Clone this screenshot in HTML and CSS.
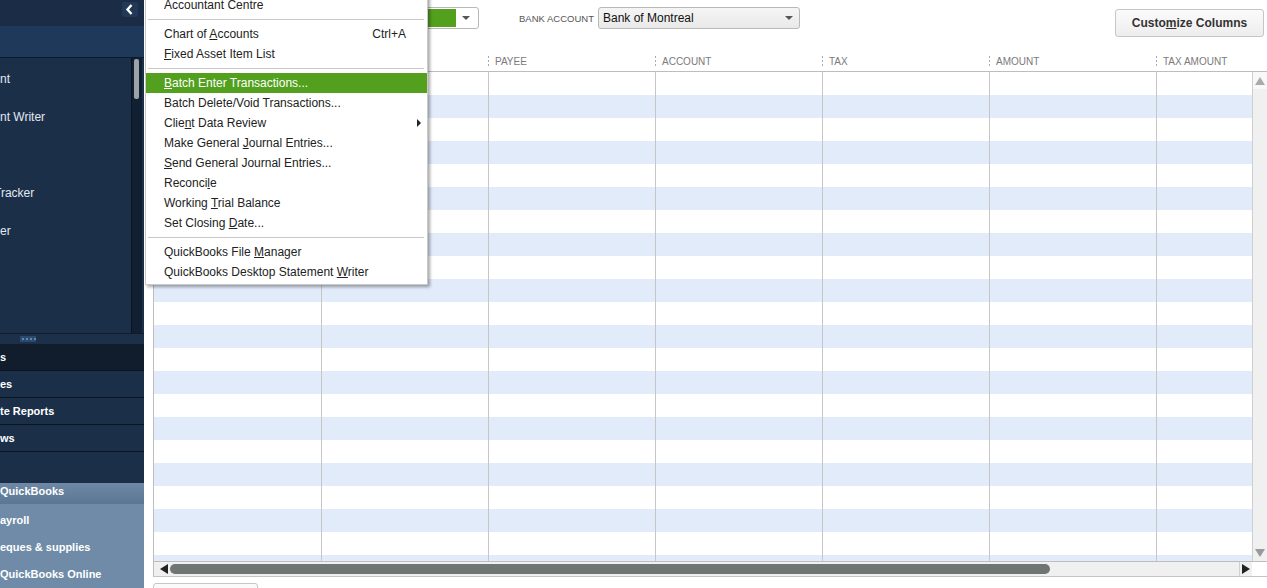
FILE: index.html
```html
<!DOCTYPE html>
<html>
  <head>
    <meta charset="utf-8">
    <title>Batch Enter Transactions - QuickBooks</title>
    <link rel="stylesheet" href="styles.css">
  </head>
  <body>
    <div id="app">
      <div id="sidebar">
        <div class="side-top">
          <span class="collapse">
            <svg width="16" height="15" viewBox="0 0 16 15"><path d="M9.5 3 L5.5 7.5 L9.5 12" fill="none" stroke="#fff" stroke-width="2.4"/></svg>
          </span>
        </div>
        <div class="side-band"></div>
        <div class="shortcuts">
          <ul class="short-list">
            <li>nt</li>
            <li>nt Writer</li>
            <li></li>
            <li class="cut">Tracker</li>
            <li>er</li>
            <li></li>
            <li></li>
          </ul>
          <div class="side-scroll"><span class="side-thumb"></span></div>
        </div>
        <div class="grip-band"><span class="grip"></span></div>
        <ul class="side-nav">
          <li class="on">s</li>
          <li>es</li>
          <li>te Reports</li>
          <li>ws</li>
        </ul>
        <div class="side-empty"></div>
        <div class="side-head">QuickBooks</div>
        <ul class="side-more">
          <li>ayroll</li>
          <li>eques &amp; supplies</li>
          <li>QuickBooks Online</li>
        </ul>
      </div>

      <div id="main">
        <div class="toolbar">
          <div class="field type">
            <div class="dropdown green"><span class="fill"></span><span class="caret"></span></div>
          </div>
          <div class="field bank">
            <span class="label">BANK ACCOUNT</span>
            <div class="dropdown bank-select"><span class="value">Bank of Montreal</span><span class="caret"></span></div>
          </div>
          <div></div>
          <button class="btn customize">Custo<u>m</u>ize Columns</button>
        </div>

        <div class="col-head">
          <div class="hcell first"></div>
          <div class="hcell"></div>
          <div class="hcell">PAYEE</div>
          <div class="hcell">ACCOUNT</div>
          <div class="hcell">TAX</div>
          <div class="hcell">AMOUNT</div>
          <div class="hcell">TAX AMOUNT</div>
        </div>

        <div class="grid">
          <div class="grid-body">
            <div id="rows" class="rows"></div>
            <div class="vscroll">
              <span class="vbtn top"><span class="tri-up"></span></span>
              <span class="vtrack"></span>
              <span class="vbtn"><span class="tri-down"></span></span>
            </div>
          </div>
          <div class="hscroll">
            <span class="hbtn"><span class="tri-left"></span></span>
            <div class="htrack"><span class="hthumb"></span></div>
            <span class="hbtn right"><span class="tri-right"></span></span>
            <span class="corner"></span>
          </div>
        </div>

        <div class="footer">
          <button class="btn save"></button>
        </div>
      </div>

      <ul id="menu">
        <li class="item"><span>Accountant Centre</span></li>
        <li class="sep"></li>
        <li class="item"><span>Chart of <u>A</u>ccounts</span><span class="key">Ctrl+A</span></li>
        <li class="item"><span><u>F</u>ixed Asset Item List</span></li>
        <li class="sep"></li>
        <li class="item active"><span><u>B</u>atch Enter Transactions...</span></li>
        <li class="item"><span>Batch Delete/Void Transactions...</span></li>
        <li class="item"><span>Clie<u>n</u>t Data Review</span><span class="arrow"></span></li>
        <li class="item"><span>Make General <u>J</u>ournal Entries...</span></li>
        <li class="item"><span><u>S</u>end General Journal Entries...</span></li>
        <li class="item"><span>Reconci<u>l</u>e</span></li>
        <li class="item"><span>Working <u>T</u>rial Balance</span></li>
        <li class="item"><span>Set Closing <u>D</u>ate...</span></li>
        <li class="sep"></li>
        <li class="item"><span>QuickBooks File <u>M</u>anager</span></li>
        <li class="item"><span>QuickBooks Desktop Statement <u>W</u>riter</span></li>
      </ul>
    </div>

    <script>
      var rows = document.getElementById('rows');
      var r, c, row, cell;
      for (r = 0; r < 22; r++) {
        row = document.createElement('div');
        row.className = 'row';
        for (c = 0; c < 7; c++) {
          cell = document.createElement('div');
          cell.className = 'cell';
          row.appendChild(cell);
        }
        rows.appendChild(row);
      }
    </script>
  </body>
</html>
```

FILE: styles.css
```css
html, body {
  margin: 0;
  height: 100%;
  overflow: hidden;
}

body {
  font-family: "Liberation Sans", Arial, sans-serif;
  background: #fff;
}

ul {
  list-style: none;
  margin: 0;
  padding: 0;
}

#app {
  position: relative;
  display: flex;
  height: 588px;
}

/* left icon bar */
#sidebar {
  width: 144px;
  flex: none;
  display: flex;
  flex-direction: column;
  background: #1b2f49;
  color: #fff;
  overflow: hidden;
  white-space: nowrap;
}

.side-top {
  height: 26px;
  background: #1b2d46;
  display: flex;
  justify-content: flex-end;
  padding: 2px 6px 0 0;
  box-sizing: border-box;
}

.collapse {
  width: 16px;
  height: 15px;
  background: #223857;
  border-radius: 2px;
}

.collapse svg {
  display: block;
}

.side-band {
  height: 31px;
  background: #1f395b;
  border-bottom: 1px solid #0f1a2a;
}

.shortcuts {
  height: 276px;
  display: flex;
}

.short-list {
  flex: 1;
  padding-top: 2px;
}

.short-list li {
  height: 38px;
  line-height: 38px;
  font-size: 12px;
  color: #e2e9f1;
}

.cut {
  text-indent: -6px;
}

.side-scroll {
  width: 11px;
  margin-right: 2px;
  background: #111f33;
  border-left: 1px solid #0b1522;
  box-sizing: border-box;
  padding: 1px 0 0 2px;
}

.side-thumb {
  display: block;
  width: 5px;
  height: 40px;
  background: #9ca2a8;
  border-radius: 2px;
}

.grip-band {
  height: 10px;
  border-top: 1px solid #0f1a2a;
  background: #1c304a;
  padding-left: 20px;
}

.grip {
  display: block;
  width: 16px;
  height: 6px;
  margin-top: 2px;
  background: #2a4a70 radial-gradient(circle, #7d9bc0 0.6px, transparent 1px) 1px 0 / 4px 6px;
}

.side-nav li {
  height: 26px;
  line-height: 26px;
  border-bottom: 1px solid #0b1520;
  font-size: 11px;
  font-weight: bold;
  color: #fff;
}

.side-nav li.on {
  background: #111c2c;
}

.side-empty {
  height: 31px;
}

.side-head {
  height: 21px;
  line-height: 17px;
  font-size: 11px;
  font-weight: bold;
  background: linear-gradient(#6e89a6, #5b7692);
}

.side-more {
  flex: 1;
  background: #6f8ba8;
  padding-top: 3px;
}

.side-more li {
  height: 27px;
  line-height: 27px;
  font-size: 11px;
  font-weight: bold;
  color: #fff;
}

/* main register area */
#main {
  flex: 1;
  min-width: 0;
  padding-left: 9px;
  overflow: hidden;
}

.toolbar {
  height: 50px;
  box-sizing: border-box;
  padding-top: 7px;
  display: grid;
  grid-template-columns: 326px auto 1fr auto;
  align-items: start;
}

.field {
  display: flex;
  align-items: center;
  gap: 4px;
}

.field.type {
  justify-self: end;
}

.field.bank {
  padding-left: 40px;
}

.label {
  font-size: 9.5px;
  color: #555;
}

.dropdown {
  height: 22px;
  box-sizing: border-box;
  border: 1px solid #b8b8b8;
  border-radius: 3px;
  display: flex;
  align-items: center;
}

.dropdown.green {
  width: 149px;
  background: #fff;
}

.green .fill {
  flex: 1;
  height: 18px;
  margin-left: 1px;
  background: #53a01f;
}

.caret {
  width: 0;
  height: 0;
  border-left: 4px solid transparent;
  border-right: 4px solid transparent;
  border-top: 4px solid #555;
}

.green .caret {
  margin: 0 8px 0 6px;
}

.bank-select {
  width: 202px;
  background: linear-gradient(#f5f5f5, #e9e9e9);
  padding-left: 4px;
  justify-content: space-between;
}

.bank-select .value {
  font-size: 12px;
  color: #111;
}

.bank-select .caret {
  margin-right: 6px;
}

.btn {
  font-family: "Liberation Sans", Arial, sans-serif;
  border: 1px solid #c6c6c6;
  border-radius: 3px;
  background: linear-gradient(#fbfbfb, #ededed);
  color: #333;
  padding: 0;
}

.btn.customize {
  width: 149px;
  height: 28px;
  margin: 2px 3px 0 0;
  font-size: 12px;
  font-weight: bold;
}

.col-head {
  height: 21px;
  margin-left: 1px;
  display: grid;
  grid-template-columns: repeat(7, 167px);
}

.hcell {
  font-size: 10px;
  color: #7a7a7a;
  line-height: 21px;
  padding: 1px 0 0 7px;
  background-image: repeating-linear-gradient(to bottom, #aaa 0 2px, transparent 2px 4px);
  background-size: 1px 10px;
  background-position: 0 6px;
  background-repeat: no-repeat;
}

.grid {
  border-top: 1px solid #bdbdbd;
  border-left: 1px solid #bdbdbd;
  border-bottom: 1px solid #c4c4c4;
}

.grid-body {
  height: 489px;
  display: flex;
}

.rows {
  flex: 1;
  min-width: 0;
  overflow: hidden;
}

.row {
  height: 23px;
  display: grid;
  grid-template-columns: 168px repeat(6, 167px);
}

.row:nth-child(even) {
  background: #e1ebfa;
}

.cell {
  border-right: 1px solid #c6c6c6;
}

.vscroll {
  width: 15px;
  flex: none;
  box-sizing: border-box;
  border-left: 1px solid #cfcfcf;
  background: #f0f0f0;
  display: flex;
  flex-direction: column;
}

.vbtn {
  height: 17px;
  display: flex;
  align-items: center;
  justify-content: center;
}

.vbtn.top {
  background: #f8f8f8;
}

.vtrack {
  flex: 1;
}

.tri-up,
.tri-down {
  width: 0;
  height: 0;
  border-left: 5px solid transparent;
  border-right: 5px solid transparent;
}

.tri-up {
  border-bottom: 8px solid #aaa;
}

.tri-down {
  border-top: 8px solid #999;
}

.hscroll {
  height: 15px;
  box-sizing: border-box;
  border-top: 1px solid #bdbdbd;
  display: flex;
}

.hbtn {
  width: 16px;
  background: #f0f0f0;
  display: flex;
  align-items: center;
  justify-content: center;
}

.hbtn.right {
  width: 12px;
  border-left: 1px solid #d0d0d0;
}

.tri-left,
.tri-right {
  width: 0;
  height: 0;
  border-top: 5px solid transparent;
  border-bottom: 5px solid transparent;
}

.tri-left {
  border-right: 8px solid #222;
  margin-left: 4px;
}

.tri-right {
  border-left: 8px solid #222;
}

.htrack {
  flex: 1;
  background: #f0f0f0;
  padding-top: 2px;
}

.hthumb {
  display: block;
  width: 880px;
  height: 10px;
  border-radius: 5px;
  background: #6e7573;
}

.corner {
  width: 15px;
  background: #fff;
}

.footer {
  padding-top: 6px;
}

.btn.save {
  width: 105px;
  height: 26px;
}

/* Accountant drop-down menu */
#menu {
  position: absolute;
  left: 145px;
  top: -9px;
  width: 283px;
  box-sizing: border-box;
  background: #fff;
  border: 1px solid #c9c9c9;
  box-shadow: 2px 2px 3px rgba(0, 0, 0, 0.35);
  padding: 3px 0 2px;
  font-size: 12px;
  color: #222;
}

#menu .item {
  height: 20px;
  line-height: 20px;
  padding: 0 6px 0 18px;
  display: flex;
  justify-content: space-between;
  align-items: center;
  white-space: nowrap;
}

#menu .item.active {
  background: #52a01e;
  color: #fff;
}

#menu .key {
  margin-right: 15px;
}

#menu .arrow {
  width: 0;
  height: 0;
  border-top: 4px solid transparent;
  border-bottom: 4px solid transparent;
  border-left: 4px solid #222;
}

#menu .sep {
  height: 1px;
  margin: 4px 3px 4px 2px;
  background: #c8c8c8;
}
```
